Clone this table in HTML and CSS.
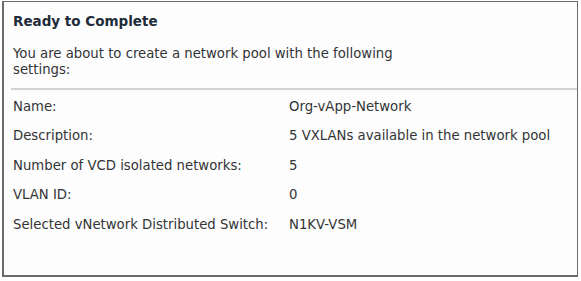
FILE: index.html
```html
<!DOCTYPE html>
<html lang="en">
<head>
    <meta charset="UTF-8">
    <title>Ready to Complete</title>
    <link rel="stylesheet" href="styles.css">
</head>
<body>
    <div class="panel">
        <h1>Ready to Complete</h1>
        <p class="intro">You are about to create a network pool with the following<br>settings:</p>
        <div class="summary">
            <div class="row"><span class="label">Name:</span><span class="value">Org-vApp-Network</span></div>
            <div class="row"><span class="label">Description:</span><span class="value">5 VXLANs available in the network pool</span></div>
            <div class="row"><span class="label">Number of VCD isolated networks:</span><span class="value">5</span></div>
            <div class="row"><span class="label">VLAN ID:</span><span class="value">0</span></div>
            <div class="row"><span class="label">Selected vNetwork Distributed Switch:</span><span class="value">N1KV-VSM</span></div>
        </div>
    </div>
</body>
</html>
```

FILE: styles.css
```css
body {
    margin: 0;
    background: #ffffff;
    font-family: "DejaVu Sans", Verdana, sans-serif;
    color: #323436;
}

.panel {
    width: 576px;
    height: 276px;
    margin: 1px 0 0 2px;
    border: 1px solid #6a6a6a;
    border-left-width: 2px;
    border-bottom-width: 2px;
    background: #fdfdfd;
    box-sizing: border-box;
}

h1 {
    margin: 0;
    padding: 12px 0 0 9px;
    font-size: 13.5px;
    line-height: 15px;
    font-weight: bold;
    color: #1e2b38;
}

.intro {
    margin: 0;
    padding: 17px 0 10px 9px;
    font-size: 13.25px;
    line-height: 16px;
}

.summary {
    margin-left: 7px;
    border-top: 2px solid #d2d4d4;
    padding-top: 1.5px;
}

.row {
    display: flex;
    height: 29.5px;
    align-items: center;
    font-size: 13.25px;
}

.label {
    width: 276px;
    padding-left: 2px;
}
```
